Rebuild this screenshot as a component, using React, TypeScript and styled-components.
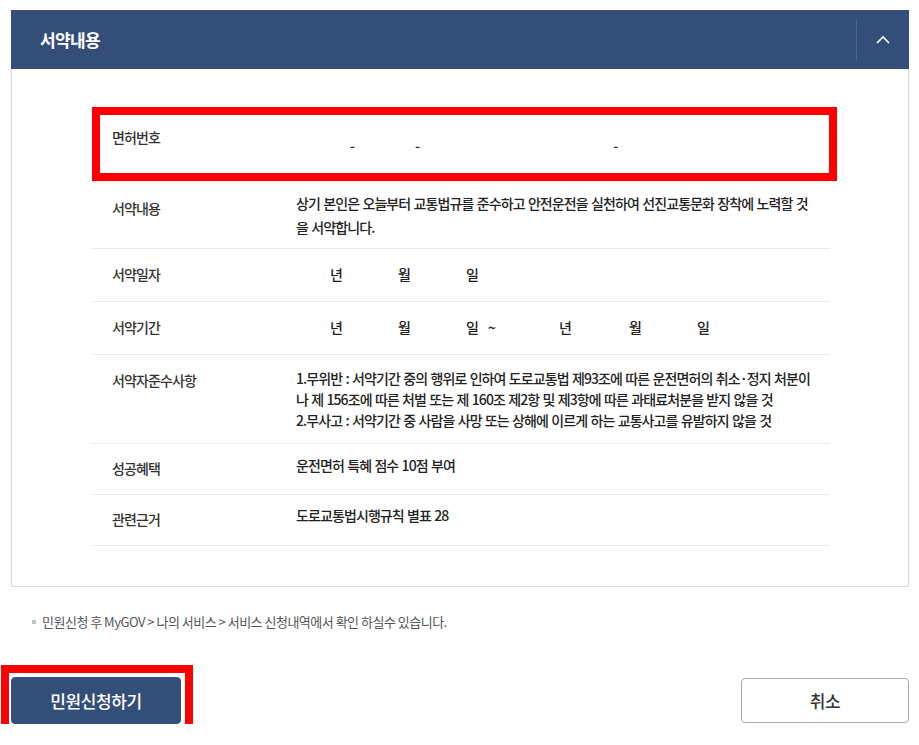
import React from 'react'
import styled, { createGlobalStyle } from 'styled-components'

const color = {
  navy: '#344e7a',
  navyLine: '#4d6690',
  text: '#222',
  label: '#333',
  line: '#ebebeb',
  border: '#d6d6d6',
  red: '#ff0000',
}

const GlobalStyle = createGlobalStyle`
  body {
    margin: 0;
    background: #fff;
    font-family: "Noto Sans CJK KR", "Noto Sans", sans-serif;
    color: ${color.text};
  }
`

const Page = styled.div`
  width: 898px;
  padding: 10px 0 0 11px;
`

const Header = styled.div`
  height: 59px;
  background: ${color.navy};
  display: flex;
  align-items: center;
  justify-content: space-between;
`

const Title = styled.h2`
  margin: 0;
  padding-left: 29px;
  font-size: 17px;
  font-weight: 700;
  letter-spacing: -0.6px;
  color: #fff;
`

const Toggle = styled.button`
  width: 53px;
  height: 40px;
  padding: 0;
  border: none;
  border-left: 1px solid ${color.navyLine};
  background: transparent;
  display: flex;
  align-items: center;
  justify-content: center;
`

const Body = styled.div`
  border: 1px solid ${color.border};
  border-top: none;
  padding: 38px 78px 40px 80px;
`

const Row = styled.div<{ $pt: number; $pb: number; $mark?: boolean }>`
  position: relative;
  display: grid;
  grid-template-columns: 204px 1fr;
  align-items: start;
  padding: ${p => p.$pt}px 0 ${p => p.$pb}px;
  border-bottom: 1px solid ${color.line};
  font-size: 14px;
  font-weight: 500;
  letter-spacing: -0.9px;
  word-spacing: 1px;
  ${p => p.$mark && `
    &::after {
      content: '';
      position: absolute;
      top: 0;
      left: 0;
      right: -7px;
      bottom: 0;
      border: 8px solid ${color.red};
    }
  `}
`

const Label = styled.div<{ $mt?: number }>`
  padding-left: 20px;
  margin-top: ${p => p.$mt || 0}px;
  margin-bottom: ${p => -(p.$mt || 0)}px;
  line-height: 22px;
  color: ${color.label};
`

const Content = styled.div<{ $lh?: number; $mt?: number }>`
  line-height: ${p => p.$lh || 22}px;
  margin-top: ${p => p.$mt || 0}px;
  white-space: nowrap;
  color: ${color.text};
`

const Blank = styled.span<{ $w: number }>`
  display: inline-block;
  vertical-align: top;
  width: ${p => p.$w}px;
`

const Unit = styled.span`
  display: inline-block;
  vertical-align: top;
  width: 14px;
  text-align: center;
`

const Note = styled.p`
  margin: 26px 0 0;
  padding-left: 21px;
  display: flex;
  align-items: center;
  gap: 6px;
  font-size: 13px;
  line-height: 18px;
  letter-spacing: -0.5px;
  color: #555;
  &::before {
    content: '';
    width: 4px;
    height: 4px;
    background: #c4c4c4;
  }
`

const Actions = styled.div`
  margin-top: 46px;
  display: flex;
  justify-content: space-between;
  align-items: center;
`

const Marked = styled.div`
  position: relative;
  &::after {
    content: '';
    position: absolute;
    top: -12px;
    left: -10px;
    right: -12px;
    bottom: -13px;
    border: 8px solid ${color.red};
    pointer-events: none;
  }
`

const Button = styled.button<{ $primary?: boolean }>`
  width: ${p => (p.$primary ? 170 : 168)}px;
  height: ${p => (p.$primary ? 47 : 45)}px;
  border-radius: 4px;
  border: 1px solid ${p => (p.$primary ? color.navy : '#a9a9a9')};
  background: ${p => (p.$primary ? color.navy : '#fff')};
  color: ${p => (p.$primary ? '#fff' : '#333')};
  font-family: "Noto Sans CJK KR", "Noto Sans", sans-serif;
  font-size: 17px;
  font-weight: 500;
  letter-spacing: -0.4px;
  cursor: pointer;
`

const Chevron = () => (
  <svg width="14" height="9" viewBox="0 0 14 9">
    <polyline points="1,8 7,2 13,8" fill="none" stroke="#fff" strokeWidth="1.6" />
  </svg>
)

const DateText = ({ range }: { range?: boolean }) => (
  <Content>
    <Blank $w={33} />
    <Unit>년</Unit>
    <Blank $w={54} />
    <Unit>월</Unit>
    <Blank $w={54} />
    <Unit>일</Unit>
    {range && (
      <>
        <Blank $w={9} />
        <span>~</span>
        <Blank $w={63} />
        <Unit>년</Unit>
        <Blank $w={56} />
        <Unit>월</Unit>
        <Blank $w={54} />
        <Unit>일</Unit>
      </>
    )}
  </Content>
)

export default function App() {
  return (
    <Page>
      <GlobalStyle />
      <Header>
        <Title>서약내용</Title>
        <Toggle aria-label="접기">
          <Chevron />
        </Toggle>
      </Header>
      <Body>
        <Row $pt={19} $pb={25} $mark>
          <Label>면허번호</Label>
          <Content $mt={8}>
            <Blank $w={54} />-<Blank $w={61} />-<Blank $w={194} />-
          </Content>
        </Row>
        <Row $pt={9} $pb={9}>
          <Label $mt={6}>서약내용</Label>
          <Content $lh={24}>
            상기 본인은 오늘부터 교통법규를 준수하고 안전운전을 실천하여 선진교통문화 장착에 노력할 것
            <br />을 서약합니다.
          </Content>
        </Row>
        <Row $pt={14} $pb={16}>
          <Label>서약일자</Label>
          <DateText />
        </Row>
        <Row $pt={14} $pb={16}>
          <Label>서약기간</Label>
          <DateText range />
        </Row>
        <Row $pt={13} $pb={12}>
          <Label $mt={1}>서약자준수사항</Label>
          <Content $lh={21}>
            1.무위반 : 서약기간 중의 행위로 인하여 도로교통법 제93조에 따른 운전면허의 취소·정지 처분이
            <br />나 제 156조에 따른 처벌 또는 제 160조 제2항 및 제3항에 따른 과태료처분을 받지 않을 것
            <br />2.무사고 : 서약기간 중 사람을 사망 또는 상해에 이르게 하는 교통사고를 유발하지 않을 것
          </Content>
        </Row>
        <Row $pt={10} $pb={18}>
          <Label $mt={3}>성공혜택</Label>
          <Content>운전면허 특혜 점수 10점 부여</Content>
        </Row>
        <Row $pt={9} $pb={19}>
          <Label $mt={4}>관련근거</Label>
          <Content>도로교통법시행규칙 별표 28</Content>
        </Row>
      </Body>
      <Note>민원신청 후 MyGOV &gt; 나의 서비스 &gt; 서비스 신청내역에서 확인 하실수 있습니다.</Note>
      <Actions>
        <Marked>
          <Button $primary>민원신청하기</Button>
        </Marked>
        <Button>취소</Button>
      </Actions>
    </Page>
  )
}
